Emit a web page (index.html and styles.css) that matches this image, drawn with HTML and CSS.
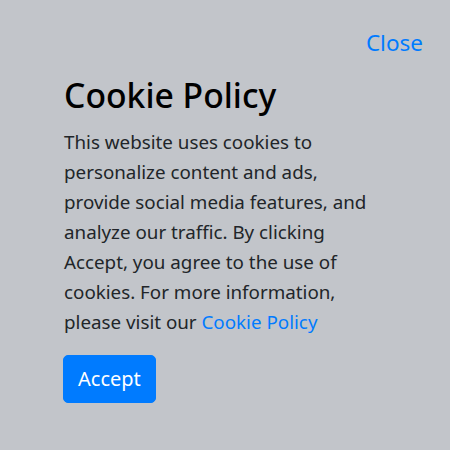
FILE: index.html
```html
<!DOCTYPE html>
<html>
<head>
<meta charset="utf-8">
<link rel="stylesheet" href="styles.css">
</head>
<body>
<div class="page">
  <a class="close" href="#">Close</a>
  <div class="content">
    <h1 class="title">Cookie Policy</h1>
    <p class="text">This website uses cookies to personalize content and ads, provide social media features, and analyze our traffic. By clicking Accept, you agree to the use of cookies. For more information, please visit our <a class="link" href="#">Cookie Policy</a></p>
    <button class="accept">Accept</button>
  </div>
</div>
</body>
</html>
```
FILE: styles.css
```css
html, body {
  margin: 0;
  padding: 0;
  background: #c2c5ca;
}
body {
  font-family: "Noto Sans", "Open Sans", sans-serif;
  color: #212529;
  width: 450px;
  height: 450px;
  overflow: hidden;
}
.page {
  display: flex;
  flex-direction: column;
  padding: 28px 27px 0 64px;
}
.close {
  align-self: flex-end;
  font-size: 22.5px;
  line-height: 30px;
  color: #007bff;
  text-decoration: none;
}
.content {
  display: flex;
  flex-direction: column;
  align-items: flex-start;
  width: 310px;
}
.title {
  margin: 13px 0 8px;
  font-size: 33.7px;
  line-height: 48px;
  font-weight: 500;
  color: #000;
}
.text {
  margin: 0 0 18px;
  font-size: 18.8px;
  line-height: 30px;
}
.link {
  color: #007bff;
  text-decoration: none;
}
.accept {
  margin-left: -1px;
  font-family: inherit;
  font-size: 20px;
  line-height: 30px;
  padding: 8px 14px;
  border: 1px solid #007bff;
  border-radius: 5px;
  background: #007bff;
  color: #fff;
  cursor: pointer;
}
```
